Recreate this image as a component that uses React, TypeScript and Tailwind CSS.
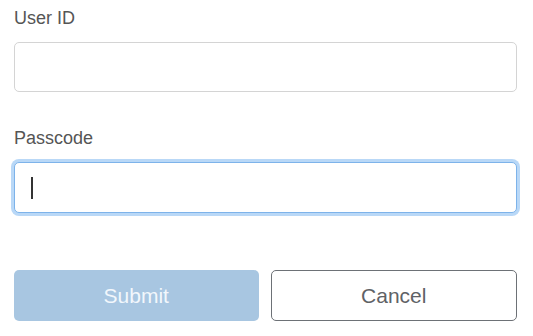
import React from 'react';

const font = { fontFamily: '"Liberation Sans", Arial, sans-serif' };

function Label({ children }: { children: React.ReactNode }) {
    return <div className="text-[18px] leading-[24px] text-[#555555]">{children}</div>;
}

export default function App() {
    return (
        <div className="w-[533px] h-[336px] bg-white pl-[14px] pr-[16px] pt-[6px]" style={font}>
            <Label>User ID</Label>
            <div className="mt-[12px] h-[50px] rounded-[5px] border border-[#d4d4d4] bg-white" />

            <div className="mt-[34px]">
                <Label>Passcode</Label>
            </div>
            <div className="mt-[12px] h-[51px] rounded-[5px] border-[1.5px] border-[#7db3ea] bg-white ring-[3px] ring-[#b9d8f7] flex items-center pl-[16px]">
                <span className="block w-[1.5px] h-[22px] bg-[#333333]" />
            </div>

            <div className="mt-[57px] flex gap-[12px]">
                <button className="flex-1 h-[51px] rounded-[5px] bg-[#a8c6e1] text-[21px] text-[#f2f7fc]">
                    Submit
                </button>
                <button className="flex-1 h-[51px] rounded-[5px] border border-[#6d7176] bg-white text-[21px] text-[#5f6266]">
                    Cancel
                </button>
            </div>
        </div>
    );
}
